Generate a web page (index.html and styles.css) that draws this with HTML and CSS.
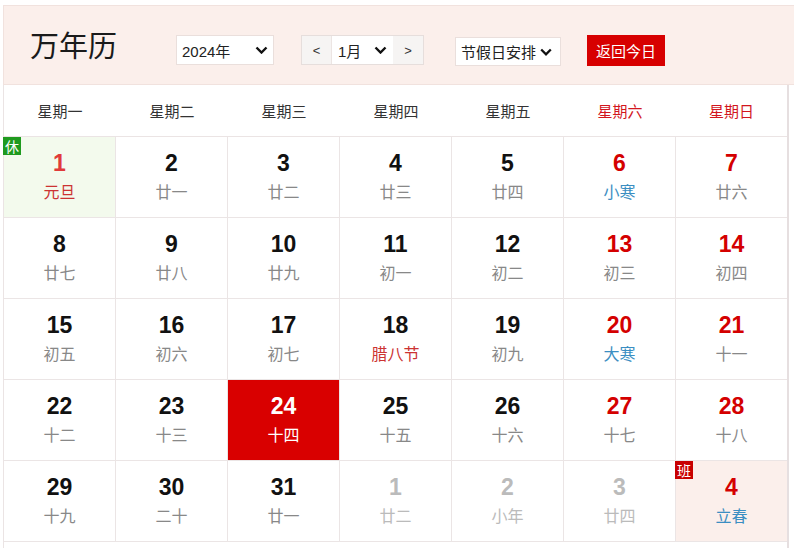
FILE: index.html
```html
<!DOCTYPE html>
<html lang="zh">
<head>
<meta charset="utf-8">
<title>万年历</title>
<link rel="stylesheet" href="styles.css">
</head>
<body>
<div class="page">
  <div class="header">
    <div class="title">万年历</div>
    <div class="sel year">2024年<svg class="chev" width="13" height="8" viewBox="0 0 13 8"><path d="M1.5 1.5 L6.5 6.5 L11.5 1.5" fill="none" stroke="#111" stroke-width="2.4"/></svg></div>
    <div class="month-group">
      <div class="arrow">&lt;</div>
      <div class="month">1月<svg class="chev" width="13" height="8" viewBox="0 0 13 8"><path d="M1.5 1.5 L6.5 6.5 L11.5 1.5" fill="none" stroke="#111" stroke-width="2.4"/></svg></div>
      <div class="arrow next">&gt;</div>
    </div>
    <div class="sel holiday">节假日安排<svg class="chev" width="12" height="8" viewBox="0 0 12 8"><path d="M1.2 1.5 L6 6.3 L10.8 1.5" fill="none" stroke="#111" stroke-width="2.3"/></svg></div>
    <div class="today-btn">返回今日</div>
  </div>
  <div class="cal">
    <div class="weekdays">
      <div class="wd">星期一</div><div class="wd">星期二</div><div class="wd">星期三</div><div class="wd">星期四</div><div class="wd">星期五</div><div class="wd we">星期六</div><div class="wd we">星期日</div>
    </div>
    <div class="grid">
      <div class="cell rest"><span class="badge green">休</span><div class="num hol">1</div><div class="lunar hol">元旦</div></div>
      <div class="cell"><div class="num">2</div><div class="lunar">廿一</div></div>
      <div class="cell"><div class="num">3</div><div class="lunar">廿二</div></div>
      <div class="cell"><div class="num">4</div><div class="lunar">廿三</div></div>
      <div class="cell"><div class="num">5</div><div class="lunar">廿四</div></div>
      <div class="cell"><div class="num red">6</div><div class="lunar term">小寒</div></div>
      <div class="cell"><div class="num red">7</div><div class="lunar">廿六</div></div>

      <div class="cell"><div class="num">8</div><div class="lunar">廿七</div></div>
      <div class="cell"><div class="num">9</div><div class="lunar">廿八</div></div>
      <div class="cell"><div class="num">10</div><div class="lunar">廿九</div></div>
      <div class="cell"><div class="num">11</div><div class="lunar">初一</div></div>
      <div class="cell"><div class="num">12</div><div class="lunar">初二</div></div>
      <div class="cell"><div class="num red">13</div><div class="lunar">初三</div></div>
      <div class="cell"><div class="num red">14</div><div class="lunar">初四</div></div>

      <div class="cell"><div class="num">15</div><div class="lunar">初五</div></div>
      <div class="cell"><div class="num">16</div><div class="lunar">初六</div></div>
      <div class="cell"><div class="num">17</div><div class="lunar">初七</div></div>
      <div class="cell"><div class="num">18</div><div class="lunar fest">腊八节</div></div>
      <div class="cell"><div class="num">19</div><div class="lunar">初九</div></div>
      <div class="cell"><div class="num red">20</div><div class="lunar term">大寒</div></div>
      <div class="cell"><div class="num red">21</div><div class="lunar">十一</div></div>

      <div class="cell"><div class="num">22</div><div class="lunar">十二</div></div>
      <div class="cell"><div class="num">23</div><div class="lunar">十三</div></div>
      <div class="cell today"><div class="num">24</div><div class="lunar">十四</div></div>
      <div class="cell"><div class="num">25</div><div class="lunar">十五</div></div>
      <div class="cell"><div class="num">26</div><div class="lunar">十六</div></div>
      <div class="cell"><div class="num red">27</div><div class="lunar">十七</div></div>
      <div class="cell"><div class="num red">28</div><div class="lunar">十八</div></div>

      <div class="cell"><div class="num">29</div><div class="lunar">十九</div></div>
      <div class="cell"><div class="num">30</div><div class="lunar">二十</div></div>
      <div class="cell"><div class="num">31</div><div class="lunar">廿一</div></div>
      <div class="cell other"><div class="num">1</div><div class="lunar">廿二</div></div>
      <div class="cell other"><div class="num">2</div><div class="lunar">小年</div></div>
      <div class="cell other"><div class="num">3</div><div class="lunar">廿四</div></div>
      <div class="cell work"><span class="badge redb">班</span><div class="num red">4</div><div class="lunar term">立春</div></div>
    </div>
  </div>
</div>
</body>
</html>
```
FILE: styles.css
```css
html, body {
  margin: 0;
  padding: 0;
  background: #fff;
}
body {
  font-family: "Liberation Sans", "Noto Sans CJK SC", sans-serif;
  color: #222;
}
.page {
  padding: 5px 0 0 3px;
}
.header {
  display: flex;
  align-items: flex-start;
  height: 80px;
  box-sizing: border-box;
  background: #fbefeb;
  border-top: 1px solid #f1e2de;
  border-left: 1px solid #f1e2de;
  border-bottom: 1px solid #f1e2de;
  padding-left: 26px;
}
.title {
  font-family: "Noto Sans CJK SC", sans-serif;
  font-size: 29px;
  line-height: 29px;
  margin-top: 24px;
  color: #1a1a1a;
  width: 88px;
}
.sel {
  display: flex;
  align-items: center;
  justify-content: space-between;
  box-sizing: border-box;
  background: #fff;
  border: 1px solid #eadfdc;
  font-size: 15px;
  color: #222;
  padding: 0 5px 0 5px;
}
.year {
  margin-left: 58px;
  margin-top: 29px;
  width: 98px;
  height: 30px;
}
.month-group {
  display: flex;
  margin-left: 27px;
  margin-top: 29px;
  height: 30px;
  box-sizing: border-box;
  border: 1px solid #e6dedc;
  background: #fff;
}
.arrow {
  width: 29px;
  display: flex;
  align-items: center;
  justify-content: center;
  background: #f6f4f3;
  font-size: 13px;
  color: #333;
}
.arrow.next {
  width: 30px;
}
.month {
  width: 62px;
  display: flex;
  align-items: center;
  justify-content: space-between;
  box-sizing: border-box;
  padding: 0 6px 0 6px;
  font-size: 15px;
  border-left: 1px solid #ece5e3;
  background: #fff;
}
.holiday {
  margin-left: 31px;
  margin-top: 31px;
  width: 106px;
  height: 29px;
  padding: 0 8px 0 5px;
}
.today-btn {
  margin-left: 26px;
  margin-top: 29px;
  width: 78px;
  height: 31px;
  background: #d70000;
  color: #fff;
  font-size: 15px;
  display: flex;
  align-items: center;
  justify-content: center;
}
.cal {
  width: 786px;
  box-sizing: border-box;
  height: 463px;
  border-left: 1px solid #ebe4e4;
  border-right: 2px solid #e6dfe0;
}
.weekdays, .grid {
  display: grid;
  grid-template-columns: repeat(6, 112px) 111px;
}
.wd {
  height: 52px;
  box-sizing: border-box;
  border-bottom: 1px solid #ebe4e4;
  display: flex;
  align-items: center;
  justify-content: center;
  font-size: 15px;
  color: #333;
}
.wd.we {
  color: #d2161e;
}
.cell {
  position: relative;
  height: 81px;
  box-sizing: border-box;
  border-right: 1px solid #ebe5e5;
  border-bottom: 1px solid #ebe5e5;
  display: flex;
  flex-direction: column;
  align-items: center;
  padding-top: 13px;
}
.cell:nth-child(7n) {
  border-right: none;
}
.num {
  font-size: 23px;
  line-height: 26px;
  font-weight: bold;
  color: #111;
}
.lunar {
  margin-top: 7px;
  font-size: 16px;
  line-height: 20px;
  color: #888;
}
.num.red {
  color: #d40000;
}
.num.hol {
  color: #e03a3a;
}
.lunar.hol, .lunar.fest {
  color: #cc3333;
}
.lunar.term {
  color: #3b8ec2;
}
.rest {
  background: #f3faed;
}
.work {
  background: #fbefeb;
}
.today {
  background: #d90000;
}
.today .num, .today .lunar {
  color: #fff;
}
.other .num, .other .lunar {
  color: #bbb;
}
.badge {
  position: absolute;
  left: -1px;
  top: 0;
  width: 18px;
  height: 18px;
  font-size: 14px;
  line-height: 18px;
  text-align: center;
  color: #fff;
  font-family: "Noto Sans CJK SC", sans-serif;
}
.badge.green {
  background: #1f9a1f;
}
.badge.redb {
  background: #c80000;
}
```
